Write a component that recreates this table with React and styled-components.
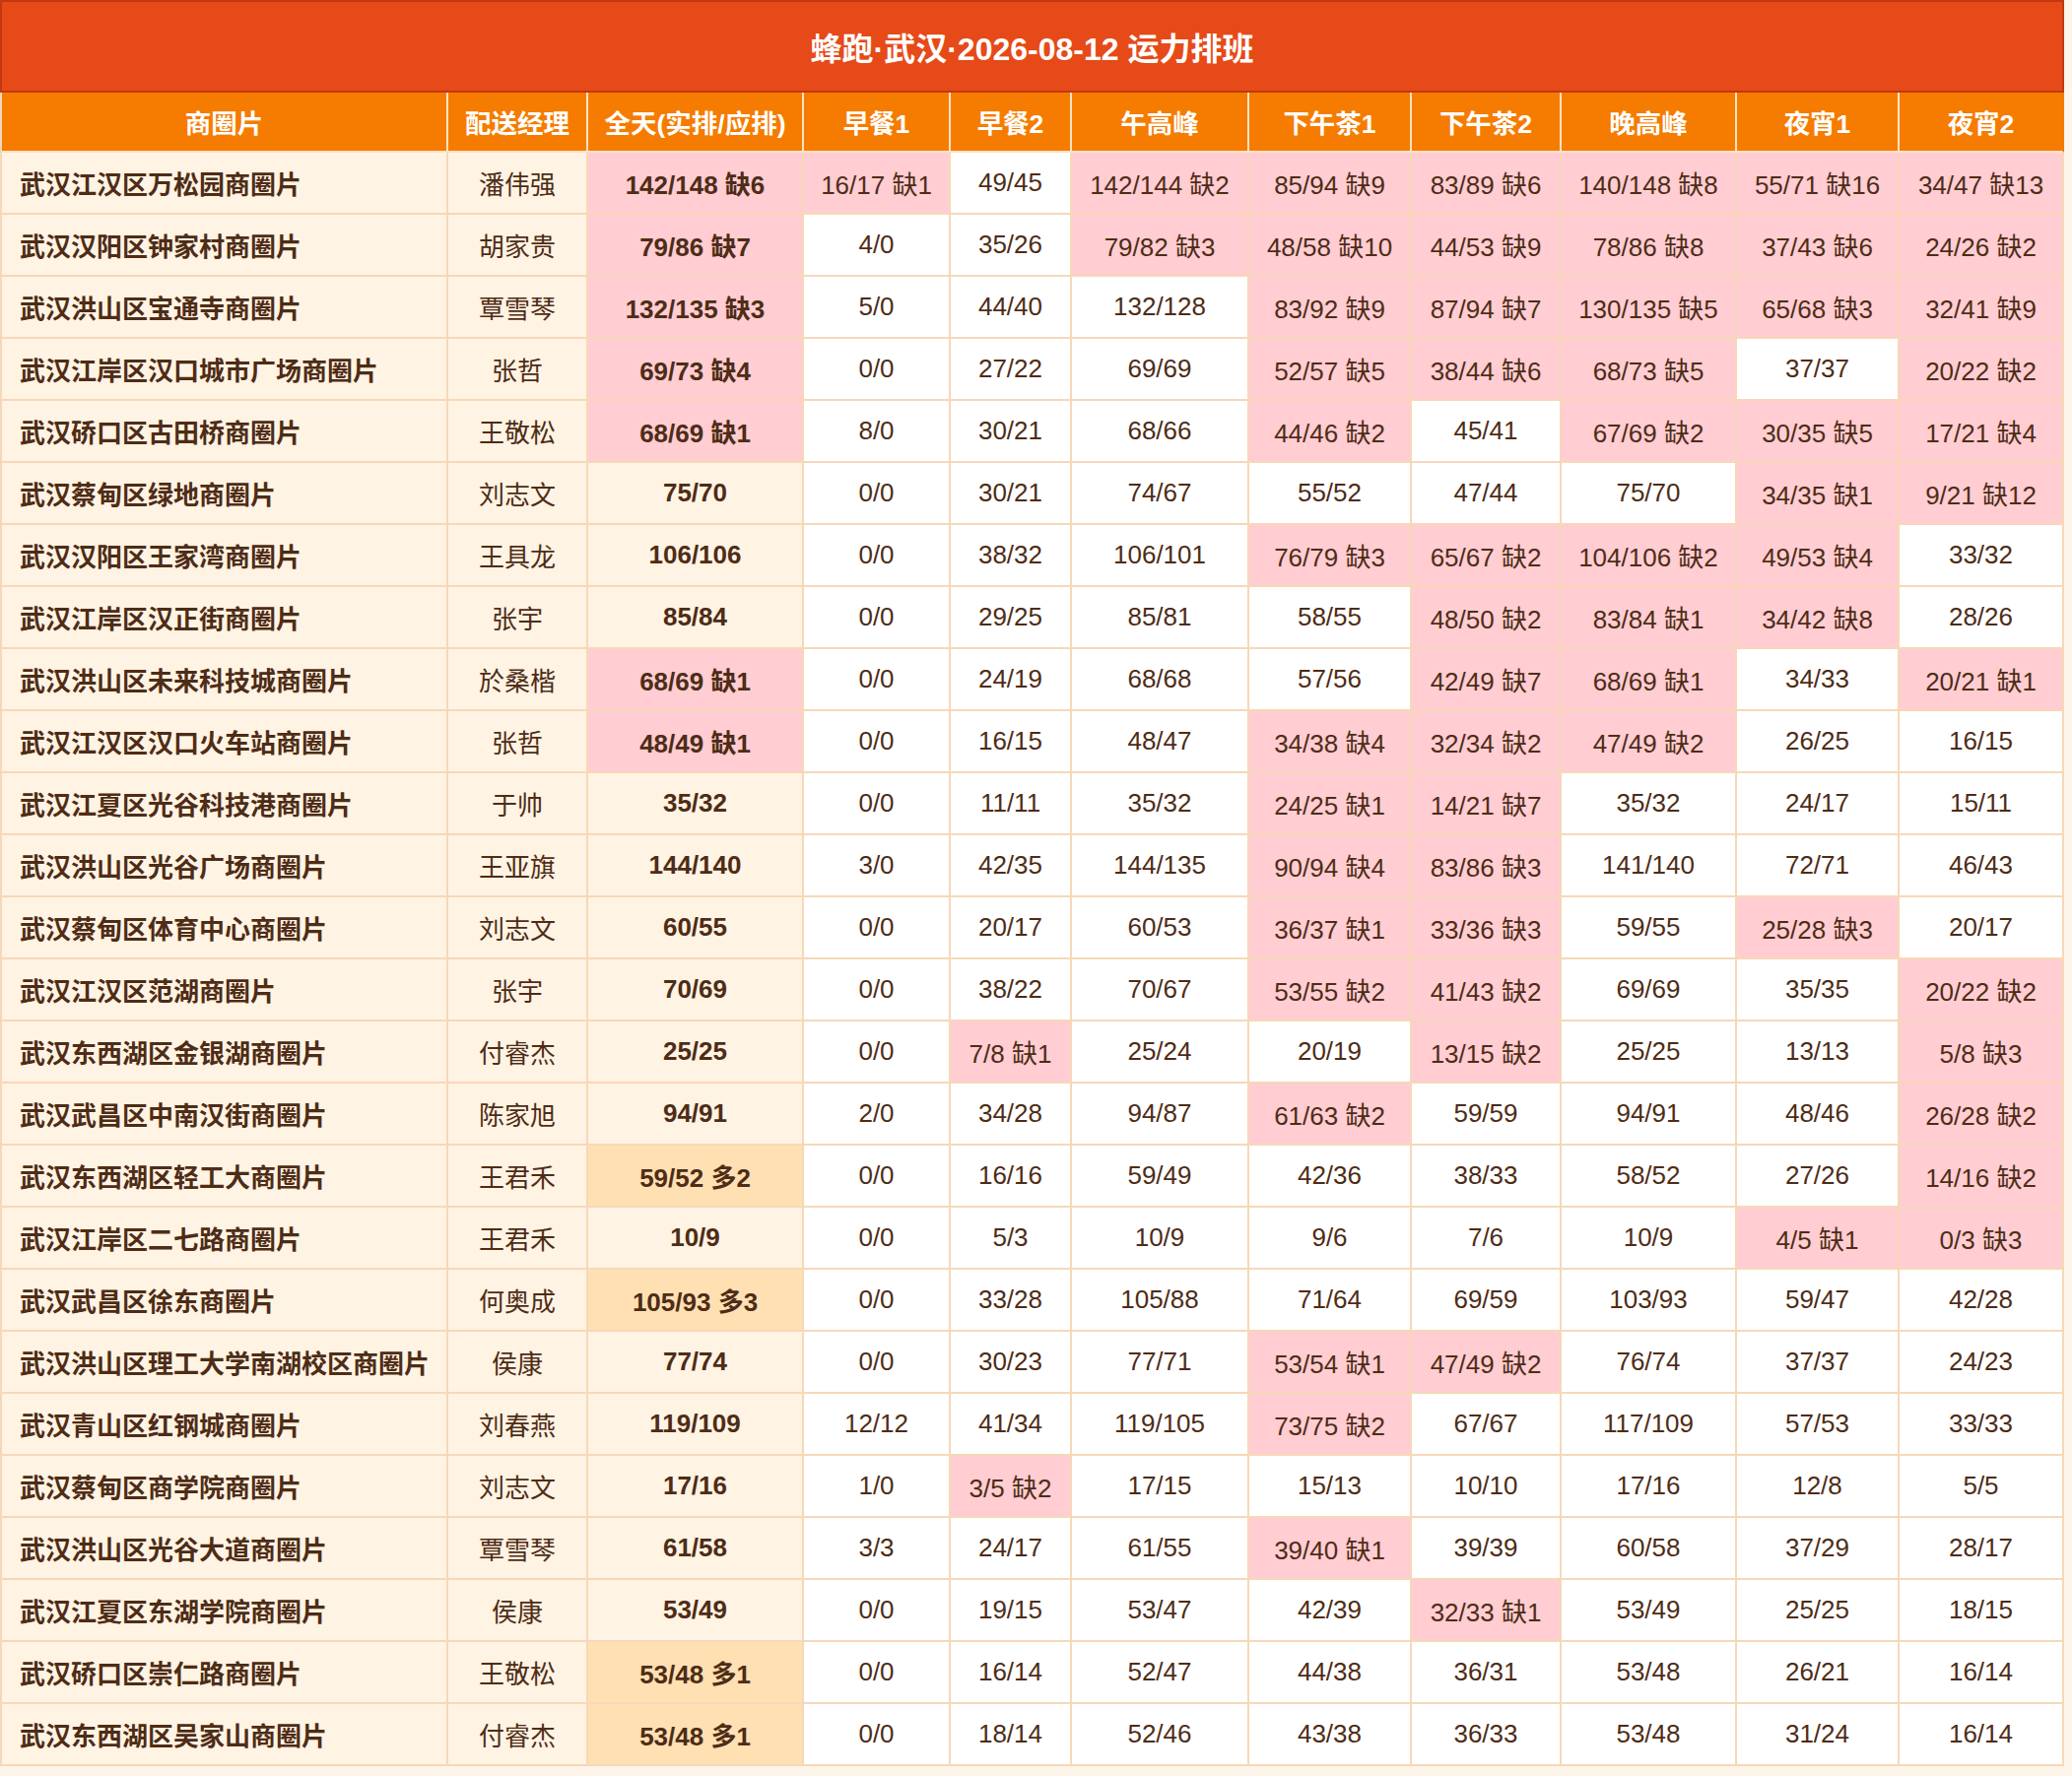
import React from "react";
import styled, { createGlobalStyle } from "styled-components";

const GlobalStyle = createGlobalStyle`
  html, body {
    margin: 0;
    padding: 0;
    background: #fdf5e9;
  }
  body {
    font-family: "Liberation Sans", "Noto Sans CJK SC", sans-serif;
    color: #4e2c16;
  }
`;

const Page = styled.div`
  width: 2095px;
`;

const Title = styled.div`
  box-sizing: border-box;
  height: 94px;
  display: flex;
  align-items: center;
  justify-content: center;
  background: #e64a19;
  border: 2px solid #c2380f;
  color: #fff;
  font-size: 32px;
  font-weight: 700;
`;

const Table = styled.table`
  width: 2095px;
  table-layout: fixed;
  border-collapse: separate;
  border-spacing: 0;
  border-left: 2px solid #f6d8b8;
`;

const Th = styled.th`
  box-sizing: border-box;
  height: 61px;
  padding: 0;
  background: #f57c00;
  color: #fff;
  font-size: 26.5px;
  font-weight: 700;
  text-align: center;
  white-space: nowrap;
  border-right: 2px solid #ffe3c4;
  border-bottom: 2px solid #fbe1c6;
  &:last-child {
    border-right-color: #f57c00;
  }
`;

const tones = {
  cream: "#fff3e3",
  pink: "#ffcdd2",
  amber: "#ffe0b2",
  white: "#ffffff",
};

const Td = styled.td`
  box-sizing: border-box;
  height: 63px;
  padding: 0 ${(p) => (p.$left ? "18px" : "0")};
  background: ${(p) => tones[p.$tone]};
  font-size: 26px;
  font-weight: ${(p) => (p.$bold ? 700 : 400)};
  text-align: ${(p) => (p.$left ? "left" : "center")};
  white-space: nowrap;
  border-right: 2px solid #f6d8b8;
  border-bottom: 2px solid #f6d8b8;
`;

const widths = [453, 142, 219, 149, 123, 180, 165, 152, 178, 165, 167];

const heads = [
  "商圈片",
  "配送经理",
  "全天(实排/应排)",
  "早餐1",
  "早餐2",
  "午高峰",
  "下午茶1",
  "下午茶2",
  "晚高峰",
  "夜宵1",
  "夜宵2",
];

const rows = [
  ["武汉江汉区万松园商圈片", "潘伟强", "142/148 缺6", "16/17 缺1", "49/45", "142/144 缺2", "85/94 缺9", "83/89 缺6", "140/148 缺8", "55/71 缺16", "34/47 缺13"],
  ["武汉汉阳区钟家村商圈片", "胡家贵", "79/86 缺7", "4/0", "35/26", "79/82 缺3", "48/58 缺10", "44/53 缺9", "78/86 缺8", "37/43 缺6", "24/26 缺2"],
  ["武汉洪山区宝通寺商圈片", "覃雪琴", "132/135 缺3", "5/0", "44/40", "132/128", "83/92 缺9", "87/94 缺7", "130/135 缺5", "65/68 缺3", "32/41 缺9"],
  ["武汉江岸区汉口城市广场商圈片", "张哲", "69/73 缺4", "0/0", "27/22", "69/69", "52/57 缺5", "38/44 缺6", "68/73 缺5", "37/37", "20/22 缺2"],
  ["武汉硚口区古田桥商圈片", "王敬松", "68/69 缺1", "8/0", "30/21", "68/66", "44/46 缺2", "45/41", "67/69 缺2", "30/35 缺5", "17/21 缺4"],
  ["武汉蔡甸区绿地商圈片", "刘志文", "75/70", "0/0", "30/21", "74/67", "55/52", "47/44", "75/70", "34/35 缺1", "9/21 缺12"],
  ["武汉汉阳区王家湾商圈片", "王具龙", "106/106", "0/0", "38/32", "106/101", "76/79 缺3", "65/67 缺2", "104/106 缺2", "49/53 缺4", "33/32"],
  ["武汉江岸区汉正街商圈片", "张宇", "85/84", "0/0", "29/25", "85/81", "58/55", "48/50 缺2", "83/84 缺1", "34/42 缺8", "28/26"],
  ["武汉洪山区未来科技城商圈片", "於桑楷", "68/69 缺1", "0/0", "24/19", "68/68", "57/56", "42/49 缺7", "68/69 缺1", "34/33", "20/21 缺1"],
  ["武汉江汉区汉口火车站商圈片", "张哲", "48/49 缺1", "0/0", "16/15", "48/47", "34/38 缺4", "32/34 缺2", "47/49 缺2", "26/25", "16/15"],
  ["武汉江夏区光谷科技港商圈片", "于帅", "35/32", "0/0", "11/11", "35/32", "24/25 缺1", "14/21 缺7", "35/32", "24/17", "15/11"],
  ["武汉洪山区光谷广场商圈片", "王亚旗", "144/140", "3/0", "42/35", "144/135", "90/94 缺4", "83/86 缺3", "141/140", "72/71", "46/43"],
  ["武汉蔡甸区体育中心商圈片", "刘志文", "60/55", "0/0", "20/17", "60/53", "36/37 缺1", "33/36 缺3", "59/55", "25/28 缺3", "20/17"],
  ["武汉江汉区范湖商圈片", "张宇", "70/69", "0/0", "38/22", "70/67", "53/55 缺2", "41/43 缺2", "69/69", "35/35", "20/22 缺2"],
  ["武汉东西湖区金银湖商圈片", "付睿杰", "25/25", "0/0", "7/8 缺1", "25/24", "20/19", "13/15 缺2", "25/25", "13/13", "5/8 缺3"],
  ["武汉武昌区中南汉街商圈片", "陈家旭", "94/91", "2/0", "34/28", "94/87", "61/63 缺2", "59/59", "94/91", "48/46", "26/28 缺2"],
  ["武汉东西湖区轻工大商圈片", "王君禾", "59/52 多2", "0/0", "16/16", "59/49", "42/36", "38/33", "58/52", "27/26", "14/16 缺2"],
  ["武汉江岸区二七路商圈片", "王君禾", "10/9", "0/0", "5/3", "10/9", "9/6", "7/6", "10/9", "4/5 缺1", "0/3 缺3"],
  ["武汉武昌区徐东商圈片", "何奥成", "105/93 多3", "0/0", "33/28", "105/88", "71/64", "69/59", "103/93", "59/47", "42/28"],
  ["武汉洪山区理工大学南湖校区商圈片", "侯康", "77/74", "0/0", "30/23", "77/71", "53/54 缺1", "47/49 缺2", "76/74", "37/37", "24/23"],
  ["武汉青山区红钢城商圈片", "刘春燕", "119/109", "12/12", "41/34", "119/105", "73/75 缺2", "67/67", "117/109", "57/53", "33/33"],
  ["武汉蔡甸区商学院商圈片", "刘志文", "17/16", "1/0", "3/5 缺2", "17/15", "15/13", "10/10", "17/16", "12/8", "5/5"],
  ["武汉洪山区光谷大道商圈片", "覃雪琴", "61/58", "3/3", "24/17", "61/55", "39/40 缺1", "39/39", "60/58", "37/29", "28/17"],
  ["武汉江夏区东湖学院商圈片", "侯康", "53/49", "0/0", "19/15", "53/47", "42/39", "32/33 缺1", "53/49", "25/25", "18/15"],
  ["武汉硚口区崇仁路商圈片", "王敬松", "53/48 多1", "0/0", "16/14", "52/47", "44/38", "36/31", "53/48", "26/21", "16/14"],
  ["武汉东西湖区吴家山商圈片", "付睿杰", "53/48 多1", "0/0", "18/14", "52/46", "43/38", "36/33", "53/48", "31/24", "16/14"],
];

const toneOf = (value, col) => {
  if (value.includes("缺")) return "pink";
  if (col < 2) return "cream";
  if (col === 2) return value.includes("多") ? "amber" : "cream";
  return "white";
};

const App = () => {
  return (
    <>
      <GlobalStyle />
      <Page>
        <Title>蜂跑·武汉·2026-08-12 运力排班</Title>
        <Table>
          <colgroup>
            {widths.map((w, i) => (
              <col key={i} style={{ width: w }} />
            ))}
          </colgroup>
          <thead>
            <tr>
              {heads.map((h) => (
                <Th key={h}>{h}</Th>
              ))}
            </tr>
          </thead>
          <tbody>
            {rows.map((row) => (
              <tr key={row[0]}>
                {row.map((cell, i) => (
                  <Td
                    key={i}
                    $tone={toneOf(cell, i)}
                    $left={i === 0}
                    $bold={i === 0 || i === 2}
                  >
                    {cell}
                  </Td>
                ))}
              </tr>
            ))}
          </tbody>
        </Table>
      </Page>
    </>
  );
};

export default App;
